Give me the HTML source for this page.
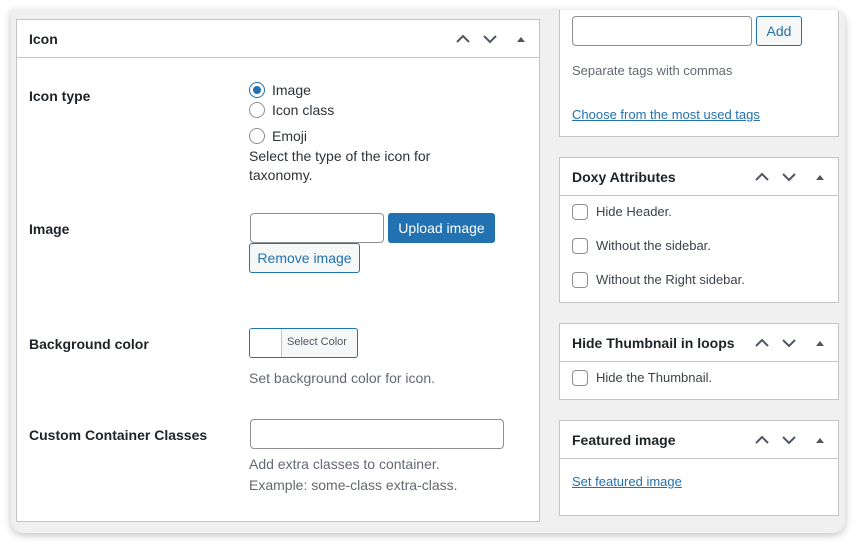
<!DOCTYPE html>
<html><head><meta charset="utf-8"><style>
*{box-sizing:border-box;margin:0;padding:0}
body{width:856px;height:545px;background:#fff;font-family:"Liberation Sans",sans-serif;font-size:13px;color:#1d2327;position:relative;overflow:hidden}
.win{position:absolute;left:11px;top:10px;width:834px;height:523px;background:#f0f0f1;border-radius:0 12px 12px 12px;box-shadow:0 2px 8px rgba(0,0,0,.25);overflow:hidden}
.box{position:absolute;background:#fff;border:1px solid #c3c4c7}
.hd{height:38px;border-bottom:1px solid #c3c4c7;position:relative}
.hd b{position:absolute;left:12px;top:11px;font-size:14px;font-weight:bold}
.ctl{position:absolute;top:11px;right:11px;width:84px;height:16px}
.abs{position:absolute}
.lbl{position:absolute;font-weight:bold;font-size:14px}
.t{position:absolute;font-size:14px;color:#3c434a}
.desc{position:absolute;font-size:14px;color:#646970}
.radio{position:absolute;width:16px;height:16px;border:1px solid #8c8f94;border-radius:50%;background:#fff}
.cb{position:absolute;width:16px;height:16px;border:1px solid #8c8f94;border-radius:4px;background:#fff}
.inp{position:absolute;border:1px solid #8c8f94;border-radius:4px;background:#fff}
a{color:#2271b1}
</style></head><body>
<div class="win">
<!-- left -->
<div class="box" style="left:5px;top:9px;width:524px;height:503px">
 <div class="hd"><b>Icon</b>
  <svg class="ctl" viewBox="0 0 84 16"><path d="M13 11l6-6 6 6M40 5l6 6 6-6" fill="none" stroke="#50575e" stroke-width="2"/><path d="M73 11l4-5 4 5z" fill="#50575e"/></svg>
 </div>
 <div class="lbl" style="left:12px;top:68px">Icon type</div>
 <div class="radio" style="left:232px;top:62px;border-color:#2271b1"><div style="position:absolute;left:3px;top:3px;width:8px;height:8px;border-radius:50%;background:#2271b1"></div></div>
 <div class="t" style="left:255px;top:62px;color:#2c3338">Image</div>
 <div class="radio" style="left:232px;top:82px"></div>
 <div class="t" style="left:255px;top:82px;color:#2c3338">Icon class</div>
 <div class="radio" style="left:232px;top:108px"></div>
 <div class="t" style="left:255px;top:108px;color:#2c3338">Emoji</div>
 <div class="t" style="left:232px;top:127px;line-height:19px;color:#2c3338">Select the type of the icon for<br>taxonomy.</div>
 <div class="lbl" style="left:12px;top:201px">Image</div>
 <div class="inp" style="left:233px;top:193px;width:134px;height:30px"></div>
 <div class="abs" style="left:371px;top:193px;width:107px;height:30px;background:#2271b1;border-radius:3px;color:#fff;font-size:14px;text-align:center;line-height:30px">Upload image</div>
 <div class="abs" style="left:232px;top:223px;width:111px;height:30px;background:#f6f7f7;border:1px solid #2271b1;border-radius:3px;color:#2271b1;font-size:14px;text-align:center;line-height:28px">Remove image</div>
 <div class="lbl" style="left:12px;top:316px">Background color</div>
 <div class="abs" style="left:232px;top:308px;width:109px;height:30px;border:1px solid #2271b1;border-radius:3px;background:#f6f7f7;overflow:hidden"><div style="position:absolute;left:0;top:0;width:32px;height:28px;background:#fff;border-right:1px solid #c3c4c7"></div><span style="position:absolute;left:37px;top:7px;font-size:11px;color:#50575e">Select Color</span></div>
 <div class="desc" style="left:232px;top:350px">Set background color for icon.</div>
 <div class="lbl" style="left:12px;top:407px">Custom Container Classes</div>
 <div class="inp" style="left:233px;top:399px;width:254px;height:30px"></div>
 <div class="desc" style="left:232px;top:434px;line-height:21px">Add extra classes to container.<br>Example: some-class extra-class.</div>
</div>
<!-- right top -->
<div class="box" style="left:548px;top:-10px;width:280px;height:137px">
 <div class="inp" style="left:12px;top:15px;width:180px;height:30px"></div>
 <div class="abs" style="left:196px;top:15px;width:46px;height:30px;border:1px solid #2271b1;border-radius:3px;background:#f6f7f7;color:#2271b1;font-size:14px;text-align:center;line-height:28px">Add</div>
 <div class="desc" style="left:12px;top:62px;font-size:13px">Separate tags with commas</div>
 <a class="abs" style="left:12px;top:106px;font-size:13px;text-decoration:underline">Choose from the most used tags</a>
</div>
<div class="box" style="left:548px;top:147px;width:280px;height:146px">
 <div class="hd"><b>Doxy Attributes</b>
  <svg class="ctl" viewBox="0 0 84 16"><path d="M13 11l6-6 6 6M40 5l6 6 6-6" fill="none" stroke="#50575e" stroke-width="2"/><path d="M73 11l4-5 4 5z" fill="#50575e"/></svg></div>
 <div class="cb" style="left:12px;top:46px"></div><div class="t" style="left:36px;top:46px;font-size:13px">Hide Header.</div>
 <div class="cb" style="left:12px;top:80px"></div><div class="t" style="left:36px;top:80px;font-size:13px">Without the sidebar.</div>
 <div class="cb" style="left:12px;top:114px"></div><div class="t" style="left:36px;top:114px;font-size:13px">Without the Right sidebar.</div>
</div>
<div class="box" style="left:548px;top:313px;width:280px;height:77px">
 <div class="hd"><b>Hide Thumbnail in loops</b>
  <svg class="ctl" viewBox="0 0 84 16"><path d="M13 11l6-6 6 6M40 5l6 6 6-6" fill="none" stroke="#50575e" stroke-width="2"/><path d="M73 11l4-5 4 5z" fill="#50575e"/></svg></div>
 <div class="cb" style="left:12px;top:46px"></div><div class="t" style="left:36px;top:46px;font-size:13px">Hide the Thumbnail.</div>
</div>
<div class="box" style="left:548px;top:410px;width:280px;height:96px">
 <div class="hd"><b>Featured image</b>
  <svg class="ctl" viewBox="0 0 84 16"><path d="M13 11l6-6 6 6M40 5l6 6 6-6" fill="none" stroke="#50575e" stroke-width="2"/><path d="M73 11l4-5 4 5z" fill="#50575e"/></svg></div>
 <a class="abs" style="left:12px;top:53px;font-size:13px;text-decoration:underline">Set featured image</a>
</div>
</div>
</body></html>
